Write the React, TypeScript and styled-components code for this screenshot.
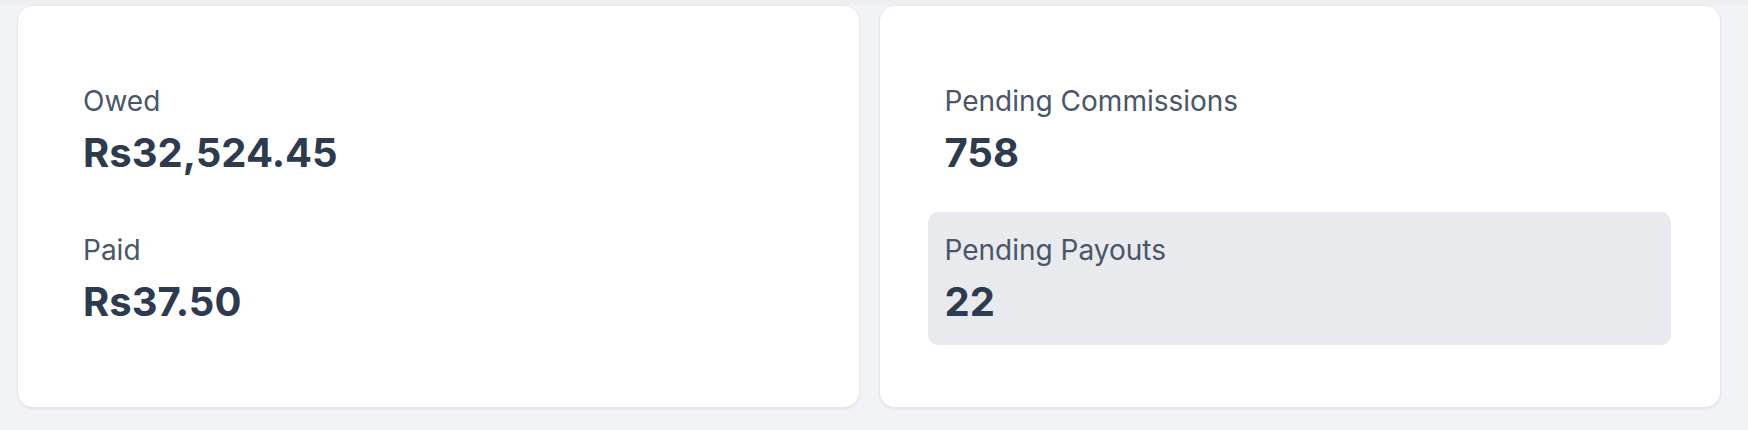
import React from "react";
import styled, { createGlobalStyle } from "styled-components";

const GlobalStyle = createGlobalStyle`
  html, body {
    margin: 0;
    padding: 0;
    background: #f2f3f7;
    font-family: Inter, "Noto Sans", Arial, sans-serif;
  }
`;

const Page = styled.div`
  height: 430px;
  box-sizing: border-box;
  padding: 6px 28px 0 18px;
  background: linear-gradient(#eceef2 0, #eceef2 5px, #f2f3f7 5px);
`;

const Grid = styled.div`
  display: grid;
  grid-template-columns: 1fr 1fr;
  gap: 21px;
`;

const Card = styled.section`
  height: 401px;
  box-sizing: border-box;
  background: #ffffff;
  border-radius: 15px;
  box-shadow: 0 0 0 1px #e6e8ec, 0 2px 3px rgba(30, 40, 60, 0.1);
  padding: 57px 49px 0 48px;
  display: flex;
  flex-direction: column;
  gap: 16px;
`;

const Stat = styled.div<{ $active?: boolean }>`
  padding: 18px 17px 19px;
  border-radius: 10px;
  background: ${(p) => (p.$active ? "#e9eaee" : "transparent")};
`;

const Label = styled.div`
  font-size: 28px;
  line-height: 41px;
  font-weight: 400;
  color: #4a5568;
`;

const Value = styled.div`
  margin-top: 7px;
  font-size: 40px;
  line-height: 48px;
  font-weight: 700;
  color: #2e3a4d;
`;

interface IStat {
  label: string;
  value: string;
  active?: boolean;
}

const cards: IStat[][] = [
  [
    { label: "Owed", value: "Rs32,524.45" },
    { label: "Paid", value: "Rs37.50" },
  ],
  [
    { label: "Pending Commissions", value: "758" },
    { label: "Pending Payouts", value: "22", active: true },
  ],
];

function App() {
  return (
    <>
      <GlobalStyle />
      <Page>
        <Grid>
          {cards.map((stats, i) => (
            <Card key={i}>
              {stats.map((s) => (
                <Stat key={s.label} $active={s.active}>
                  <Label>{s.label}</Label>
                  <Value>{s.value}</Value>
                </Stat>
              ))}
            </Card>
          ))}
        </Grid>
      </Page>
    </>
  );
}

export default App;
